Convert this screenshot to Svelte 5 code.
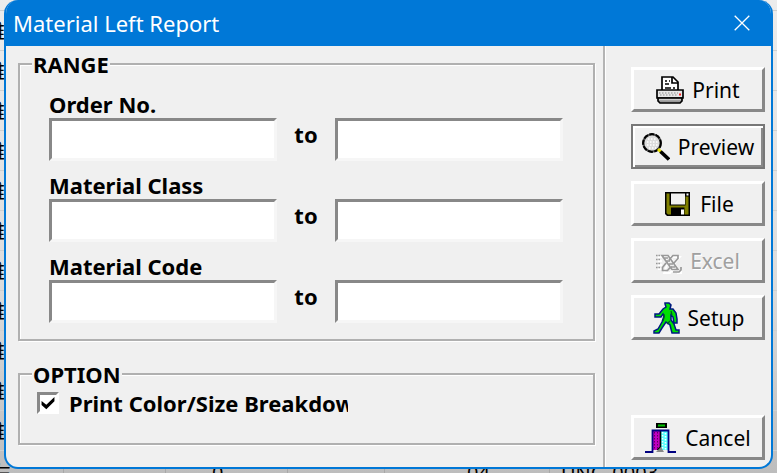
<script>
  let ranges = $state([
    { id: 'order', label: 'Order No.', from: '', to: '' },
    { id: 'class', label: 'Material Class', from: '', to: '' },
    { id: 'code', label: 'Material Code', from: '', to: '' }
  ]);
  let breakdown = $state(true);

  // rows of the grid that sits behind the dialog
  const rows = ['雅', '雅', '雅', '雅', '雅', '雅', '雅', '雅', '雅', '雅', '雅', '左'];
</script>

<div class="desktop">
  <div class="sheet" aria-hidden="true">
    {#each rows as name, i}
      <div class="line">
        <span class="name">{name}</span>
        {#if i === rows.length - 1}
          <span></span>
          <span class="unit">0</span>
          <span></span>
          <span class="qty">04</span>
          <span class="ref">UNC_0003</span>
        {/if}
      </div>
    {/each}
  </div>

  <div class="dialog" role="dialog" aria-labelledby="title">
    <header>
      <h1 id="title">Material Left Report</h1>
      <button class="close" aria-label="Close">
        <svg width="16" height="16" viewBox="0 0 16 16"><path d="M.7.7l14.6 14.6M15.3.7L.7 15.3" stroke="#fff" stroke-width="1.3" fill="none" /></svg>
      </button>
    </header>

    <div class="body">
      <main>
        <fieldset class="range">
          <legend>RANGE</legend>
          {#each ranges as r}
            <div class="row">
              <label class="caption" for="{r.id}-from">{r.label}</label>
              <input class="text" id="{r.id}-from" bind:value={r.from} />
              <label class="to" for="{r.id}-to">to</label>
              <input class="text" id="{r.id}-to" bind:value={r.to} />
            </div>
          {/each}
        </fieldset>

        <fieldset class="option">
          <legend>OPTION</legend>
          <label class="check">
            <input type="checkbox" bind:checked={breakdown} />
            <span>Print Color/Size Breakdown</span>
          </label>
        </fieldset>
      </main>

      <aside>
        <button class="cmd">
          <svg width="28" height="28" viewBox="0 0 28 28">
            <path d="M6 15V1h11l5 5v9z" fill="#fff" stroke="#000" stroke-width="1.7" />
            <path d="M16 1v6h6" fill="none" stroke="#000" stroke-width="1.7" />
            <path d="M9 5h2M13 5h1M9 8h4M9 12h6M17 12h2" stroke="#000" stroke-width="1.6" />
            <path d="M1 14h26v8H1z" fill="#e6e6e6" stroke="#000" stroke-width="1.7" />
            <path d="M3 17h19M4 19h18" stroke="#aaa" stroke-width="1.3" stroke-dasharray="1.5 1.5" />
            <path d="M23 18.5h2" stroke="#f22" stroke-width="2" />
            <path d="M2 22h24v3l-2 2H4l-2-2z" fill="#999" stroke="#000" stroke-width="1.7" />
            <path d="M3 23.6h22" stroke="#ccc" stroke-width="1.2" />
          </svg>
          Print
        </button>
        <button class="cmd default">
          <svg width="28" height="28" viewBox="0 0 28 28">
            <circle cx="10" cy="10" r="8.7" fill="#dcdcdc" stroke="#555" stroke-width="2.2" />
            <circle cx="10" cy="10" r="8.9" fill="none" stroke="#000" stroke-width="2" stroke-dasharray="5 1.5" />
            <path d="M6 6h9M5 9h11M5 12h11M7 15h7" stroke="#fff" stroke-width="1.4" stroke-dasharray="1.5 1.5" />
            <path d="M16 16l4 4" stroke="#e8e000" stroke-width="3" />
            <path d="M18.5 18.5l8.5 8" stroke="#000" stroke-width="3.6" />
          </svg>
          Preview
        </button>
        <button class="cmd">
          <svg width="30" height="26" viewBox="0 0 30 26">
            <path d="M3 1h25v24H5l-2-2z" fill="#000" />
            <path d="M4.5 2.5h3v12h16v-9h3v18h-4v-7H9v7H6l-1.5-1.5z" fill="#808000" />
            <path d="M9 2.5h14v11H9z" fill="#f2f2f2" />
            <path d="M24.5 2.5h2v2h-2z" fill="#fff" />
            <path d="M19 18.5h3v5h-3z" fill="#fff" />
          </svg>
          File
        </button>
        <button class="cmd" disabled>
          <svg class="excel" width="26" height="20" viewBox="0 0 26 20">
            <path d="M1 2h4M1 6h4M1 10h4M1 14h4M7 2h6l10 15h-6zM14 2h9l-5 6M10 10l-3 8h6l4-5M20 18h5v-4" transform="translate(1 1)" fill="none" stroke="#fff" stroke-width="1.8" />
            <path d="M0 1.5h4M0 5.5h4M0 9.5h4M0 13.5h4" stroke="#999" stroke-width="1.6" stroke-dasharray="1.6 .8" />
            <path d="M6 1.5h6l10 14h-6zM13 6l4-4.500h5v3l-4 4.500M10 9l-3.500 4.500v3h5l3.500-4M8 4h4M10 7h4M13 10h4M15 13h4" fill="none" stroke="#999" stroke-width="1.7" />
            <path d="M17 18h6l2-2v-3" fill="none" stroke="#999" stroke-width="1.7" />
          </svg>
          Excel
        </button>
        <button class="cmd">
          <svg width="28" height="32" viewBox="-1 0 28 32">
            <path d="M12 1h4l2 2-1 4h3l3 4 1 6v4h-3l-1-6-2-2v5l3 4 2 6h3v3h-7l-2-8-4-3-4 6-3 5H1v-2l4-2 4-7 2-6-1-2-2 3H2v-3h4l4-5 3-2-1-3z" fill="#00e000" stroke="#001880" stroke-width="1.5" />
            <path d="M11 12v4l-1 3M18 9l1 4M17 19l-3 3" fill="none" stroke="#005c20" stroke-width="1.2" />
          </svg>
          Setup
        </button>
        <button class="cmd cancel">
          <svg width="32" height="32" viewBox="0 0 32 32">
            <path d="M11 1h11v5H11z" fill="#000" />
            <path d="M13 2.5h7v2h-7z" fill="#00c000" />
            <path d="M8 9h7v19H8z" fill="#c000c0" />
            <path d="M9.5 10v17M12.5 10v17" stroke="#600060" stroke-width="1" stroke-dasharray="1.5 1.5" />
            <path d="M16 9h7v19h-7z" fill="#5ff" />
            <path d="M17.5 10v17M20.5 11v17" stroke="#fff" stroke-width="1.6" stroke-dasharray="1.5 1.5" />
            <path d="M15.5 9v16l-3 3" fill="none" stroke="#000" stroke-width="1.6" />
            <path d="M11 30l5-5 3 5z" fill="#888" />
            <path d="M0 30h7.5V8.5h16V30H31" fill="none" stroke="#000080" stroke-width="1.8" />
          </svg>
          Cancel
        </button>
      </aside>
    </div>
  </div>
</div>

<style>
  :global(body) {
    margin: 0;
    background: #e4e4e4;
  }

  .desktop {
    position: relative;
    box-sizing: border-box;
    min-height: 100vh;
    padding: 0 4px 4px;
    overflow: hidden;
    font-family: "Noto Sans", "Noto Sans CJK SC", sans-serif;
    font-size: 22px;
    color: #000;
  }

  /* the grid that shows round the edges of the dialog */
  .sheet {
    position: absolute;
    inset: 0;
    padding-top: 10px;
    overflow: hidden;
    background: linear-gradient(#ececec, #dcdcdc 60%, #bdbdbd);
    font-size: 20px;
    white-space: nowrap;
  }

  .line {
    display: grid;
    grid-template-columns: 63px 102px 122px 97px 165px 1fr;
    box-sizing: border-box;
    height: 40px;
    line-height: 40px;
    border-top: 1px solid #cfcfcf;
  }

  .line span + span {
    border-left: 1px solid #a8a8a8;
  }

  .line:last-child {
    line-height: 44px;
  }

  .name {
    margin-left: -15px;
    font-family: "Noto Sans CJK SC", sans-serif;
  }

  .line:last-child .name {
    margin-left: -9px;
  }

  .unit {
    padding-left: 46px;
  }

  .qty {
    padding-left: 82px;
  }

  .ref {
    padding-left: 11px;
  }

  .dialog {
    position: relative;
    overflow: hidden;
    border: 2px solid #0078d7;
    border-top: 0;
    border-radius: 14px;
    background: #f0f0f0;
  }

  header {
    display: flex;
    align-items: center;
    justify-content: space-between;
    height: 46px;
    padding: 0 21px 0 7px;
    background: #0078d7;
    color: #fff;
  }

  h1 {
    margin: 0;
    font-size: 22px;
    font-weight: 400;
  }

  .close {
    display: flex;
    padding: 0;
    border: 0;
    background: none;
  }

  .body {
    display: flex;
    min-height: 421px;
  }

  main {
    flex: 1;
    padding: 4px 8px 18px 12px;
    border-right: 2px solid #b4b4b4;
  }

  fieldset {
    min-width: 0;
    margin: 0;
    border: 2px solid #b0b0b0;
    box-shadow: 1px 1px 0 #fff, inset 1px 1px 0 #fff;
  }

  legend {
    padding: 0 1px;
    background: #f0f0f0;
    font-weight: 700;
    line-height: 28px;
  }

  .range {
    padding: 12px 30px 16px 29px;
  }

  .range legend {
    margin-left: -17px;
  }

  .row {
    display: grid;
    grid-template-columns: 1fr 58px 1fr;
    font-weight: 700;
  }

  .row + .row {
    margin-top: 10px;
  }

  .caption {
    grid-column: 1 / -1;
    line-height: 28px;
  }

  .to {
    line-height: 32px;
    text-align: center;
  }

  .text {
    box-sizing: border-box;
    width: 100%;
    min-width: 0;
    height: 43px;
    padding: 0 6px;
    border: 3px solid;
    border-color: #888 #f6f6f6 #f6f6f6 #888;
    background: #fff;
    font: inherit;
    outline: 0;
  }

  .option {
    margin-top: 19px;
    padding: 0 12px 25px 17px;
  }

  .option legend {
    margin-left: -5px;
  }

  .check {
    display: flex;
    align-items: center;
    gap: 10px;
    width: 311px;
    font-weight: 700;
    line-height: 30px;
    white-space: nowrap;
  }

  .check span {
    overflow: hidden;
  }

  .check input {
    flex: none;
    appearance: none;
    box-sizing: border-box;
    width: 22px;
    height: 22px;
    margin: 0;
    border: 3px solid;
    border-color: #888 #fff #fff #888;
    background: #fff;
  }

  .check input:checked::before {
    content: "";
    display: block;
    width: 14px;
    height: 14px;
    margin: 1px;
    background: #000;
    clip-path: polygon(4% 36%, 38% 62%, 96% 8%, 96% 38%, 38% 94%, 4% 64%);
  }

  aside {
    display: flex;
    flex-direction: column;
    gap: 12px;
    box-sizing: border-box;
    width: 166px;
    padding: 21px 6px 7px 25px;
    border-left: 1px solid #fff;
  }

  .cmd {
    display: flex;
    align-items: center;
    justify-content: center;
    gap: 8px;
    box-sizing: border-box;
    height: 45px;
    padding: 0;
    border: 3px solid;
    border-color: #fff #888 #888 #fff;
    background: #f0f0f0;
    color: #000;
    font: inherit;
    font-size: 21px;
  }

  .cmd svg {
    flex: none;
  }

  .cmd.default {
    border: 2px solid #777;
    box-shadow: inset 2px 2px 0 #fff, inset -2px -2px 0 #888;
  }

  .cmd:disabled {
    color: #a0a0a0;
    text-shadow: 1px 1px 0 #fff;
  }

  .excel {
    margin-top: 6px;
  }

  .cancel {
    margin-top: auto;
  }
</style>
